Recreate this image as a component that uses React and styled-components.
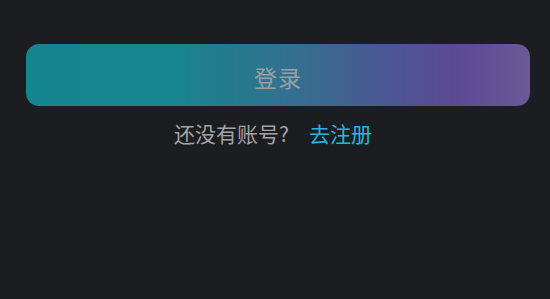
import styled, { createGlobalStyle } from 'styled-components';

const GlobalStyle = createGlobalStyle`
  html, body {
    margin: 0;
    padding: 0;
    background: #1c1d20;
  }
  body {
    font-family: "Noto Sans CJK SC", "Noto Sans", sans-serif;
  }
`;

const Page = styled.div`
  width: 550px;
  height: 299px;
  background: #1c1d20;
  padding: 44px 20px 0 26px;
  box-sizing: border-box;
  display: flex;
  flex-direction: column;
  align-items: center;
`;

const LoginButton = styled.button`
  width: 504px;
  height: 62px;
  border: none;
  border-radius: 13px;
  padding: 4px 0 0;
  background: linear-gradient(
    90deg,
    #13858f 0%,
    #168590 28%,
    #33708f 52%,
    #4f5394 75%,
    #5a4994 85%,
    #6a5a98 100%
  );
  color: #9aa0a6;
  font-family: "Noto Sans CJK SC", sans-serif;
  font-size: 23px;
  letter-spacing: 1px;
  cursor: pointer;
`;

const RegisterRow = styled.div`
  margin: 12px 10px 0 0;
  display: flex;
  align-items: center;
  gap: 20px;
  font-size: 21px;
  line-height: 30px;
`;

const Hint = styled.span`
  color: #a3a3a6;
`;

const RegisterLink = styled.a`
  color: #25b6e0;
  text-decoration: none;
`;

export default function App() {
  return (
    <>
      <GlobalStyle />
      <Page>
        <LoginButton>登录</LoginButton>
        <RegisterRow>
          <Hint>还没有账号?</Hint>
          <RegisterLink href="#">去注册</RegisterLink>
        </RegisterRow>
      </Page>
    </>
  );
}
